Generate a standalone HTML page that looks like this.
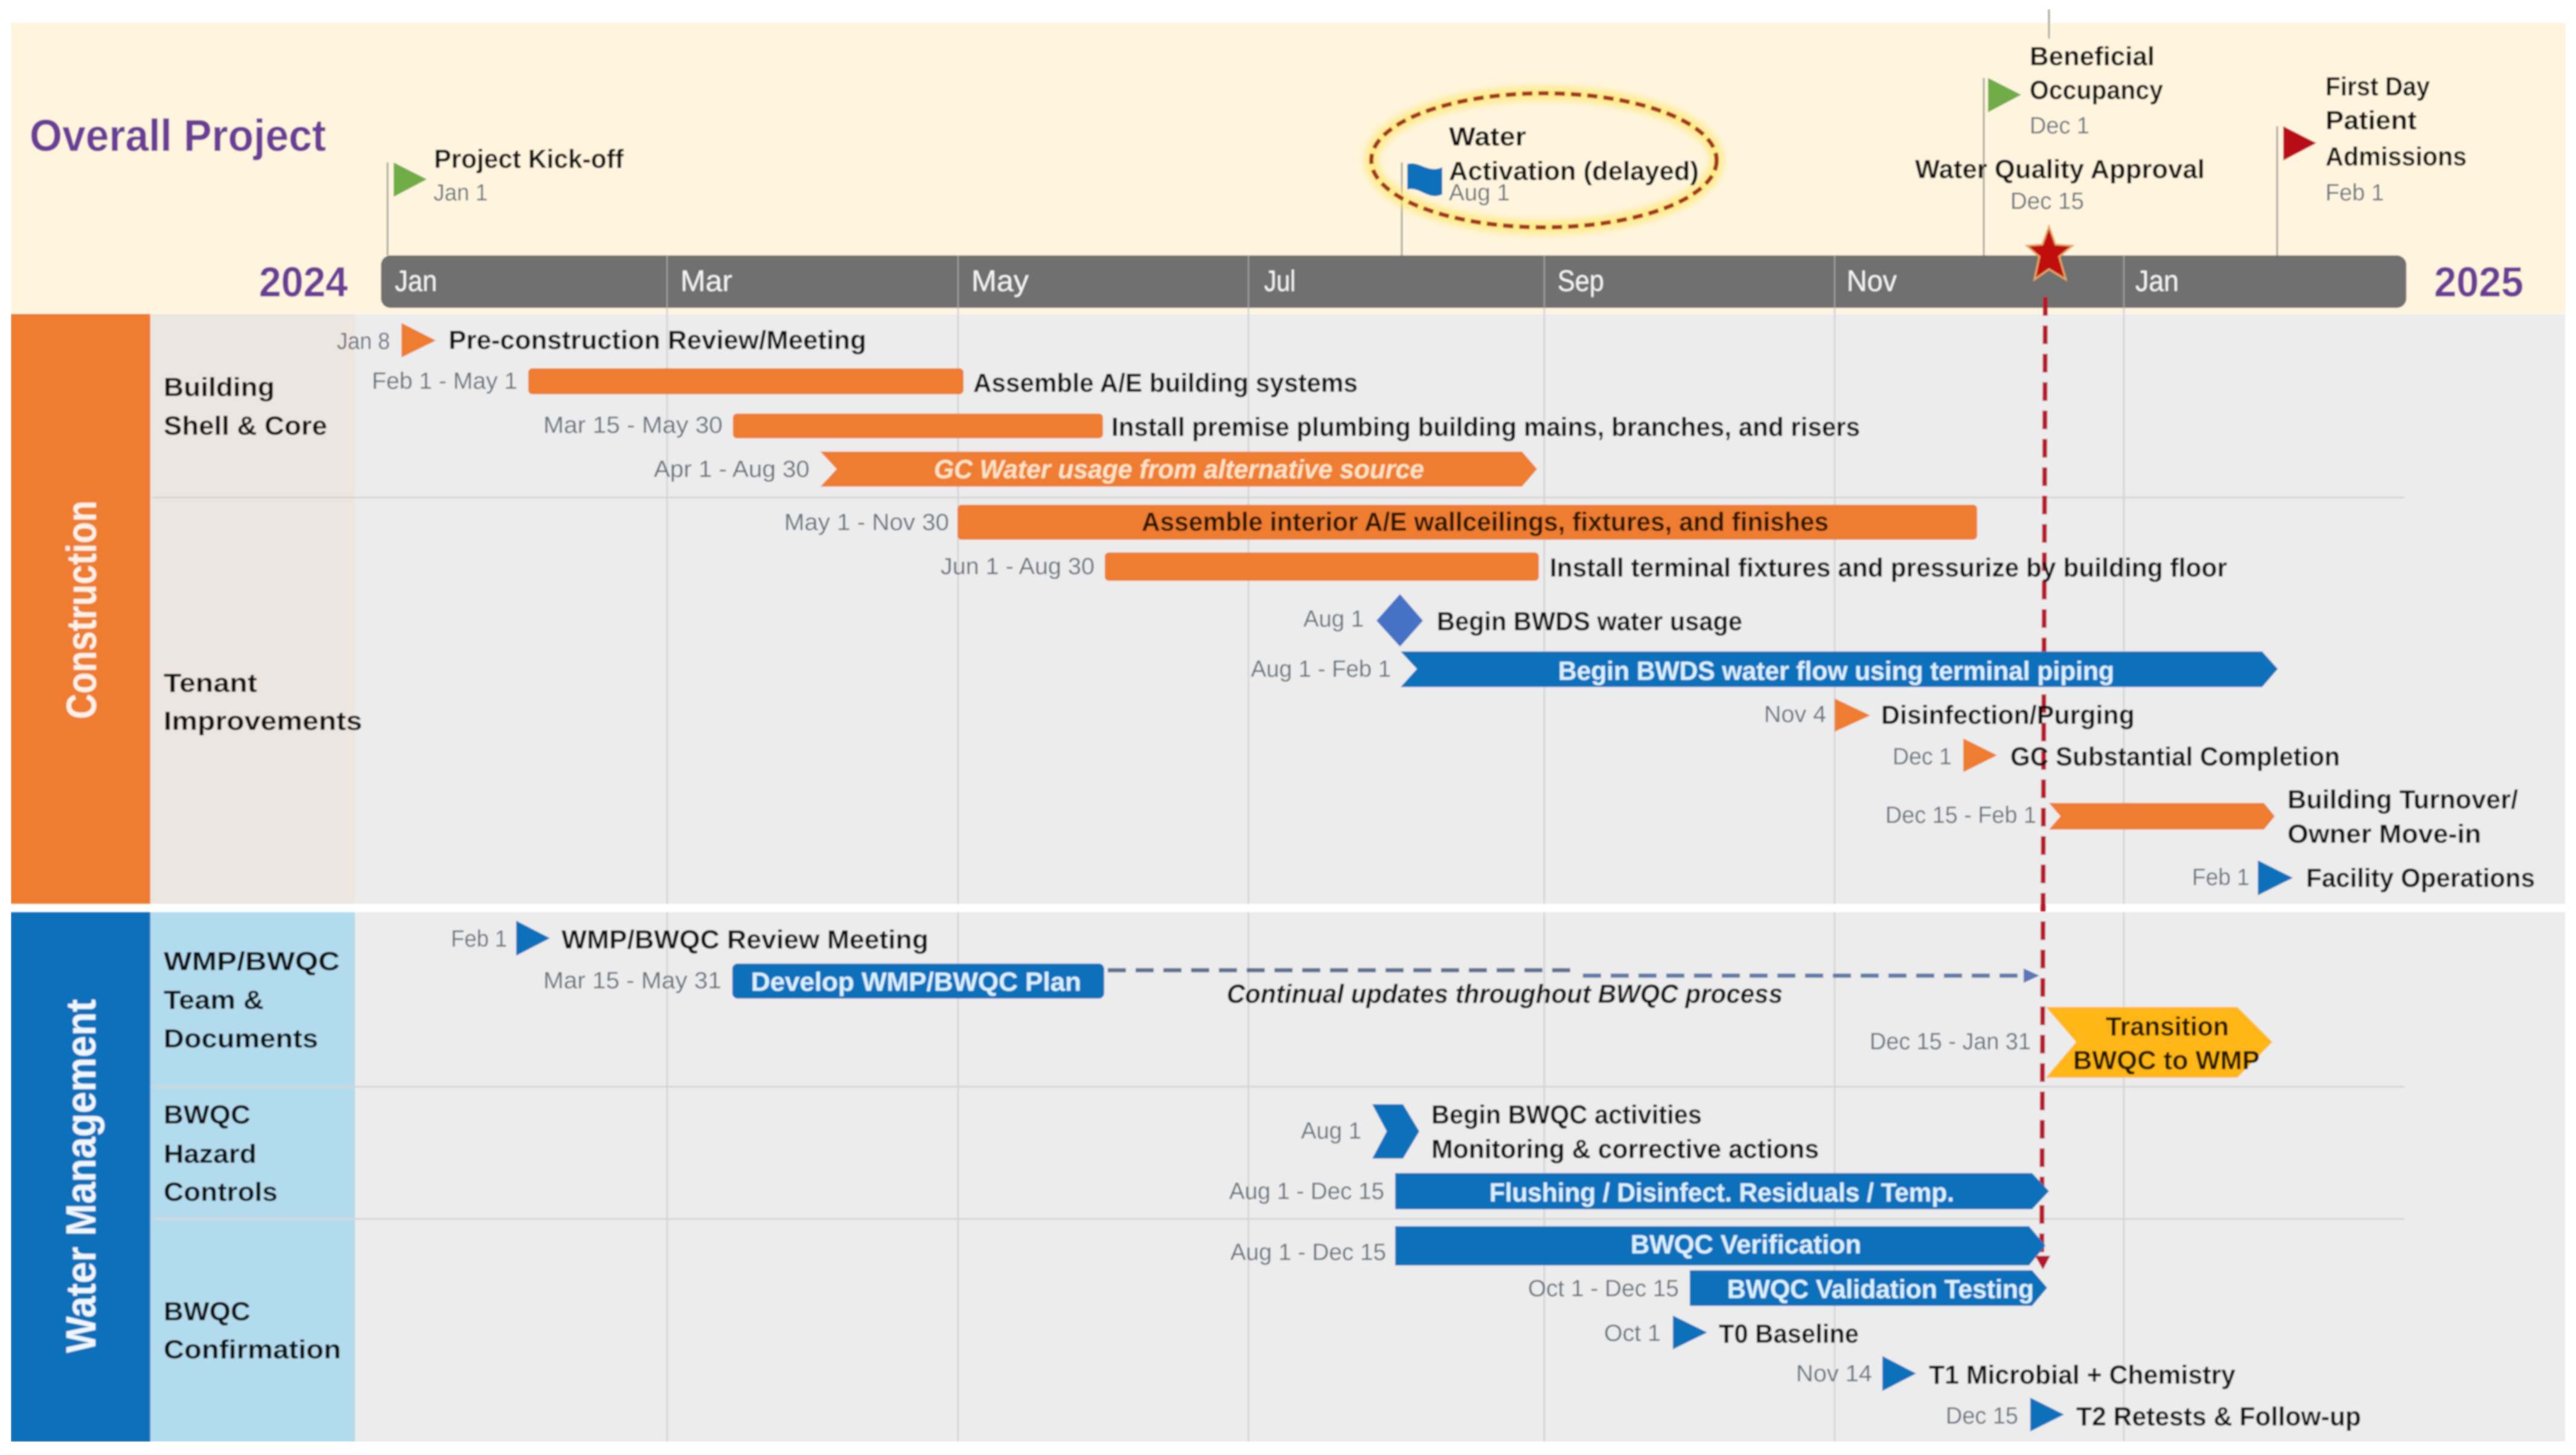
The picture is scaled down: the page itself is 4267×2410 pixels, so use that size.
<!DOCTYPE html>
<html><head><meta charset="utf-8"><title>Overall Project Timeline</title>
<style>
html,body{margin:0;padding:0;background:#fff;width:4267px;height:2410px;overflow:hidden}
svg{display:block}
text{font-family:"Liberation Sans",Arial,sans-serif}
.b{font-weight:700;font-size:44px;fill:#0c0c0c}
.d{font-size:39px;fill:#66707c}
.m{font-size:49px;fill:#f4f4f4}
.w{font-weight:700;font-size:44px;fill:#d8f1ff}
.y{font-weight:700;font-size:70px;fill:#6a3d96}
</style></head><body>
<svg xmlns="http://www.w3.org/2000/svg" width="4267" height="2410" viewBox="0 0 4267 2410">
<defs>
<filter id="s" x="0" y="0" width="100%" height="100%"><feGaussianBlur stdDeviation="1.4"/></filter>
<filter id="g" x="-10%" y="-20%" width="120%" height="140%"><feGaussianBlur stdDeviation="7"/></filter>
</defs>
<g filter="url(#s)">
<!-- backgrounds -->
<rect x="18" y="38" width="4232" height="481" fill="#fff5df"/>
<rect x="18" y="520" width="4231" height="977" fill="#ececec"/>
<rect x="18" y="1511" width="4231" height="877" fill="#ececec"/>
<rect x="18" y="520" width="231" height="977" fill="#ee7d31"/>
<rect x="249" y="520" width="339" height="977" fill="#ede5e0"/>
<rect x="18" y="1511" width="231" height="877" fill="#0b6fbb"/>
<rect x="249" y="1511" width="339" height="877" fill="#b3dbee"/>
<!-- grid -->
<g stroke="#d6d6d6" stroke-width="3" fill="none">
<path d="M1105 510V1497M1105 1511V2388M1587 510V1497M1587 1511V2388M2068 510V1497M2068 1511V2388M2558 510V1497M2558 1511V2388M3039 510V1497M3039 1511V2388M3518 510V1497M3518 1511V2388"/>
<path d="M252 824H3983M252 1800H3983M252 2019H3983"/>
</g>
<!-- top milestone stems -->
<g stroke="#a9a69a" stroke-width="3" fill="none">
<path d="M642 269V423M2322 269V423M3286 129V423M3772 209V423M3394 15V64"/>
</g>
<!-- month bar -->
<rect x="631" y="423" width="3355" height="87" rx="16" fill="#6f6f6f"/>
<path d="M1105 423V510M1587 423V510M2068 423V510M2558 423V510M3039 423V510M3518 423V510" stroke="#a5a5a5" stroke-width="2" fill="none"/>
<g class="m">
<text class="m" x="654" y="482" textLength="70" lengthAdjust="spacingAndGlyphs">Jan</text>
<text class="m" x="1127" y="482" textLength="86" lengthAdjust="spacingAndGlyphs">Mar</text>
<text class="m" x="1609" y="482" textLength="95" lengthAdjust="spacingAndGlyphs">May</text>
<text class="m" x="2094" y="482" textLength="52" lengthAdjust="spacingAndGlyphs">Jul</text>
<text class="m" x="2580" y="482" textLength="77" lengthAdjust="spacingAndGlyphs">Sep</text>
<text class="m" x="3059" y="482" textLength="83" lengthAdjust="spacingAndGlyphs">Nov</text>
<text class="m" x="3537" y="482" textLength="72" lengthAdjust="spacingAndGlyphs">Jan</text>
</g>
<text x="49" y="250" font-weight="700" font-size="74" fill="#6a3d96" textLength="491" lengthAdjust="spacingAndGlyphs">Overall Project</text>
<text class="y" x="429" y="491" textLength="147" lengthAdjust="spacingAndGlyphs">2024</text>
<text class="y" x="4032" y="491" textLength="148" lengthAdjust="spacingAndGlyphs">2025</text>
<!-- ellipse -->
<ellipse cx="2557.5" cy="265.5" rx="286" ry="111" fill="none" stroke="#ffe97a" stroke-width="20" filter="url(#g)"/>
<ellipse cx="2557.5" cy="265.5" rx="286" ry="111" fill="none" stroke="#a3351a" stroke-width="7" stroke-dasharray="17 10"/>
<!-- milestones header -->
<polygon points="652,269 707,297 652,326" fill="#6fac46"/>
<text class="b" x="719" y="278" textLength="314" lengthAdjust="spacingAndGlyphs">Project Kick-off</text>
<text class="d" x="718" y="332" textLength="90" lengthAdjust="spacingAndGlyphs">Jan 1</text>
<path d="M2331 272C2350 265 2365 288 2389 277L2389 322C2365 333 2352 308 2331 314Z" fill="#0b6fbb"/>
<text class="b" x="2400" y="241" textLength="128" lengthAdjust="spacingAndGlyphs">Water</text>
<text class="b" x="2400" y="298" textLength="414" lengthAdjust="spacingAndGlyphs">Activation (delayed)</text>
<text class="d" x="2400" y="332" textLength="101" lengthAdjust="spacingAndGlyphs">Aug 1</text>
<polygon points="3293,129 3348,157 3293,186" fill="#6fac46"/>
<text class="b" x="3362" y="108" textLength="207" lengthAdjust="spacingAndGlyphs">Beneficial</text>
<text class="b" x="3362" y="164" textLength="221" lengthAdjust="spacingAndGlyphs">Occupancy</text>
<text class="d" x="3362" y="221" textLength="99" lengthAdjust="spacingAndGlyphs">Dec 1</text>
<text class="b" x="3172" y="295" textLength="480" lengthAdjust="spacingAndGlyphs">Water Quality Approval</text>
<text class="d" x="3330" y="346" textLength="122" lengthAdjust="spacingAndGlyphs">Dec 15</text>
<polygon points="3782,209 3837,237 3782,266" fill="#b80d12"/>
<text class="b" x="3852" y="158" textLength="173" lengthAdjust="spacingAndGlyphs">First Day</text>
<text class="b" x="3852" y="214" textLength="151" lengthAdjust="spacingAndGlyphs">Patient</text>
<text class="b" x="3852" y="274" textLength="234" lengthAdjust="spacingAndGlyphs">Admissions</text>
<text class="d" x="3852" y="332" textLength="97" lengthAdjust="spacingAndGlyphs">Feb 1</text>
<!-- red dashed line -->
<line x1="3388" y1="492" x2="3382" y2="2085" stroke="#b8122c" stroke-width="8" stroke-dasharray="31 16"/>
<!-- section titles -->
<text transform="translate(159 1191) rotate(-90)" font-weight="700" font-size="70" fill="#fdf1e6" textLength="362" lengthAdjust="spacingAndGlyphs">Construction</text>
<text transform="translate(158 2241) rotate(-90)" font-weight="700" font-size="70" fill="#eef7fc" textLength="586" lengthAdjust="spacingAndGlyphs">Water Management</text>
<!-- row labels -->
<text class="b" x="271" y="656" textLength="184" lengthAdjust="spacingAndGlyphs">Building</text>
<text class="b" x="271" y="720" textLength="271" lengthAdjust="spacingAndGlyphs">Shell &amp; Core</text>
<text class="b" x="271" y="1146" textLength="155" lengthAdjust="spacingAndGlyphs">Tenant</text>
<text class="b" x="271" y="1209" textLength="329" lengthAdjust="spacingAndGlyphs">Improvements</text>
<text class="b" x="271" y="1607" textLength="292" lengthAdjust="spacingAndGlyphs">WMP/BWQC</text>
<text class="b" x="271" y="1671" textLength="166" lengthAdjust="spacingAndGlyphs">Team &amp;</text>
<text class="b" x="271" y="1735" textLength="256" lengthAdjust="spacingAndGlyphs">Documents</text>
<text class="b" x="271" y="1861" textLength="144" lengthAdjust="spacingAndGlyphs">BWQC</text>
<text class="b" x="271" y="1926" textLength="154" lengthAdjust="spacingAndGlyphs">Hazard</text>
<text class="b" x="271" y="1989" textLength="189" lengthAdjust="spacingAndGlyphs">Controls</text>
<text class="b" x="271" y="2187" textLength="144" lengthAdjust="spacingAndGlyphs">BWQC</text>
<text class="b" x="271" y="2250" textLength="294" lengthAdjust="spacingAndGlyphs">Confirmation</text>
<!-- Construction rows -->
<text class="d" x="558" y="578" textLength="88" lengthAdjust="spacingAndGlyphs">Jan 8</text>
<polygon points="665,535 722,564 665,592" fill="#ee7d31"/>
<text class="b" x="743" y="578" textLength="692" lengthAdjust="spacingAndGlyphs">Pre-construction Review/Meeting</text>
<text class="d" x="616" y="644" textLength="241" lengthAdjust="spacingAndGlyphs">Feb 1 - May 1</text>
<rect x="875" y="610" width="721" height="43" rx="7" fill="#ee7d31"/>
<text class="b" x="1612" y="649" textLength="637" lengthAdjust="spacingAndGlyphs">Assemble A/E building systems</text>
<text class="d" x="900" y="717" textLength="297" lengthAdjust="spacingAndGlyphs">Mar 15 - May 30</text>
<rect x="1214" y="685" width="613" height="41" rx="7" fill="#ee7d31"/>
<text class="b" x="1841" y="722" textLength="1240" lengthAdjust="spacingAndGlyphs">Install premise plumbing building mains, branches, and risers</text>
<text class="d" x="1083" y="790" textLength="258" lengthAdjust="spacingAndGlyphs">Apr 1 - Aug 30</text>
<polygon points="1359,748 2521,748 2546,777 2521,806 1359,806 1386,777" fill="#ee7d31"/>
<text x="1547" y="792" font-weight="700" font-style="italic" font-size="44" fill="#fde3c4" textLength="812" lengthAdjust="spacingAndGlyphs">GC Water usage from alternative source</text>
<text class="d" x="1299" y="878" textLength="273" lengthAdjust="spacingAndGlyphs">May 1 - Nov 30</text>
<rect x="1586" y="836" width="1689" height="58" rx="7" fill="#ee7d31"/>
<text class="b" x="1891" y="879" style="fill:#2b1206" textLength="1138" lengthAdjust="spacingAndGlyphs">Assemble interior A/E wallceilings, fixtures, and finishes</text>
<text class="d" x="1558" y="951" textLength="255" lengthAdjust="spacingAndGlyphs">Jun 1 - Aug 30</text>
<rect x="1830" y="915" width="719" height="47" rx="7" fill="#ee7d31"/>
<text class="b" x="2567" y="955" textLength="1122" lengthAdjust="spacingAndGlyphs">Install terminal fixtures and pressurize by building floor</text>
<text class="d" x="2159" y="1038" textLength="100" lengthAdjust="spacingAndGlyphs">Aug 1</text>
<polygon points="2319,984 2357,1028 2319,1071 2280,1028" fill="#4472c4"/>
<text class="b" x="2380" y="1044" textLength="506" lengthAdjust="spacingAndGlyphs">Begin BWDS water usage</text>
<text class="d" x="2072" y="1121" textLength="232" lengthAdjust="spacingAndGlyphs">Aug 1 - Feb 1</text>
<polygon points="2320,1079 3747,1079 3773,1108 3747,1138 2320,1138 2347,1108" fill="#0b6fbb"/>
<text class="w" x="2581" y="1126" textLength="921" lengthAdjust="spacingAndGlyphs">Begin BWDS water flow using terminal piping</text>
<text class="d" x="2922" y="1196" textLength="103" lengthAdjust="spacingAndGlyphs">Nov 4</text>
<polygon points="3039,1157 3098,1185 3039,1212" fill="#ee7d31"/>
<text class="b" x="3116" y="1199" textLength="420" lengthAdjust="spacingAndGlyphs">Disinfection/Purging</text>
<text class="d" x="3135" y="1266" textLength="98" lengthAdjust="spacingAndGlyphs">Dec 1</text>
<polygon points="3252,1223 3308,1251 3252,1279" fill="#ee7d31"/>
<text class="b" x="3330" y="1268" textLength="546" lengthAdjust="spacingAndGlyphs">GC Substantial Completion</text>
<text class="d" x="3123" y="1363" textLength="250" lengthAdjust="spacingAndGlyphs">Dec 15 - Feb 1</text>
<polygon points="3394,1330 3750,1330 3768,1352 3750,1374 3394,1374 3413,1352" fill="#ee7d31"/>
<text class="b" x="3789" y="1339" textLength="382" lengthAdjust="spacingAndGlyphs">Building Turnover/</text>
<text class="b" x="3789" y="1396" textLength="321" lengthAdjust="spacingAndGlyphs">Owner Move-in</text>
<text class="d" x="3631" y="1466" textLength="95" lengthAdjust="spacingAndGlyphs">Feb 1</text>
<polygon points="3740,1425 3798,1454 3740,1483" fill="#0b6fbb"/>
<text class="b" x="3820" y="1469" textLength="379" lengthAdjust="spacingAndGlyphs">Facility Operations</text>
<!-- Water rows -->
<text class="d" x="747" y="1568" textLength="93" lengthAdjust="spacingAndGlyphs">Feb 1</text>
<polygon points="855,1525 911,1554 855,1583" fill="#0b6fbb"/>
<text class="b" x="930" y="1571" textLength="608" lengthAdjust="spacingAndGlyphs">WMP/BWQC Review Meeting</text>
<text class="d" x="900" y="1637" textLength="295" lengthAdjust="spacingAndGlyphs">Mar 15 - May 31</text>
<rect x="1213" y="1596" width="616" height="58" rx="9" fill="#0b6fbb"/>
<text class="w" x="1244" y="1641" textLength="547" lengthAdjust="spacingAndGlyphs">Develop WMP/BWQC Plan</text>
<line x1="1835" y1="1607" x2="2612" y2="1607" stroke="#5f7090" stroke-width="7" stroke-dasharray="30 16"/>
<line x1="2622" y1="1616" x2="3355" y2="1616" stroke="#6079ac" stroke-width="7" stroke-dasharray="30 16"/>
<polygon points="3352,1604 3378,1616 3352,1628" fill="#5b77b4"/>
<text x="2032" y="1661" font-weight="700" font-style="italic" font-size="44" fill="#111" textLength="921" lengthAdjust="spacingAndGlyphs">Continual updates throughout BWQC process</text>
<text class="d" x="3097" y="1738" textLength="267" lengthAdjust="spacingAndGlyphs">Dec 15 - Jan 31</text>
<polygon points="3389,1668 3706,1668 3764,1726 3706,1785 3389,1785 3439,1726" fill="#ffb612"/>
<text class="b" x="3488" y="1715" style="fill:#1a1204" textLength="204" lengthAdjust="spacingAndGlyphs">Transition</text>
<text class="b" x="3434" y="1771" style="fill:#1a1204" textLength="309" lengthAdjust="spacingAndGlyphs">BWQC to WMP</text>
<text class="d" x="2155" y="1886" textLength="100" lengthAdjust="spacingAndGlyphs">Aug 1</text>
<polygon points="2273,1829 2324,1829 2351,1874 2324,1919 2273,1919 2297,1874" fill="#0b6fbb"/>
<text class="b" x="2371" y="1861" textLength="448" lengthAdjust="spacingAndGlyphs">Begin BWQC activities</text>
<text class="b" x="2371" y="1918" textLength="642" lengthAdjust="spacingAndGlyphs">Monitoring &amp; corrective actions</text>
<text class="d" x="2036" y="1986" textLength="257" lengthAdjust="spacingAndGlyphs">Aug 1 - Dec 15</text>
<polygon points="2311,1943 3366,1943 3394,1973 3366,2003 2311,2003" fill="#0b6fbb"/>
<text class="w" x="2467" y="1990" textLength="770" lengthAdjust="spacingAndGlyphs">Flushing / Disinfect. Residuals / Temp.</text>
<text class="d" x="2038" y="2087" textLength="258" lengthAdjust="spacingAndGlyphs">Aug 1 - Dec 15</text>
<polygon points="2311,2031 3361,2031 3388,2063 3361,2096 2311,2096" fill="#0b6fbb"/>
<text class="w" x="2701" y="2076" textLength="382" lengthAdjust="spacingAndGlyphs">BWQC Verification</text>
<polygon points="3371,2080 3396,2080 3384,2103" fill="#b4122a"/>
<text class="d" x="2531" y="2147" textLength="250" lengthAdjust="spacingAndGlyphs">Oct 1 - Dec 15</text>
<polygon points="2799,2104 3366,2104 3391,2133 3366,2163 2799,2163" fill="#0b6fbb"/>
<text class="w" x="2861" y="2150" textLength="508" lengthAdjust="spacingAndGlyphs">BWQC Validation Testing</text>
<text class="d" x="2657" y="2221" textLength="94" lengthAdjust="spacingAndGlyphs">Oct 1</text>
<polygon points="2771,2179 2828,2207 2771,2235" fill="#0b6fbb"/>
<text class="b" x="2847" y="2224" textLength="232" lengthAdjust="spacingAndGlyphs">T0 Baseline</text>
<text class="d" x="2975" y="2288" textLength="126" lengthAdjust="spacingAndGlyphs">Nov 14</text>
<polygon points="3118,2246 3174,2275 3118,2304" fill="#0b6fbb"/>
<text class="b" x="3195" y="2292" textLength="508" lengthAdjust="spacingAndGlyphs">T1 Microbial + Chemistry</text>
<text class="d" x="3223" y="2358" textLength="120" lengthAdjust="spacingAndGlyphs">Dec 15</text>
<polygon points="3363,2315 3419,2343 3363,2371" fill="#0b6fbb"/>
<text class="b" x="3439" y="2361" textLength="472" lengthAdjust="spacingAndGlyphs">T2 Retests &amp; Follow-up</text>
<!-- star -->
<polygon points="3394,375 3405,405 3433,407 3411,425 3422,463 3394,446 3370,463 3378,425 3357,407 3383,405" fill="#c00d0d" stroke="#e6a864" stroke-width="3"/>
</g>
</svg>
</body></html>
